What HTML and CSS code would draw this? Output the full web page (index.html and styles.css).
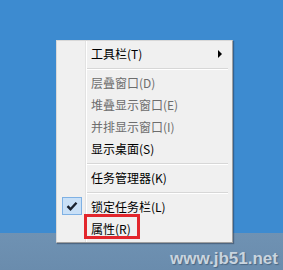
FILE: index.html
```html
<!DOCTYPE html>
<html lang="zh-CN">
<head>
<meta charset="utf-8">
<link rel="stylesheet" href="styles.css">
</head>
<body>
<div class="screen">
  <div class="desktop"></div>
  <div class="taskbar">
    <span class="watermark">www.jb51.net</span>
  </div>
  <div class="menu">
    <div class="gutter-line"></div>
    <div class="item">
      <span class="label">工具栏(T)</span>
      <span class="arrow"></span>
    </div>
    <div class="sep"></div>
    <div class="item disabled"><span class="label">层叠窗口(D)</span></div>
    <div class="item disabled"><span class="label">堆叠显示窗口(E)</span></div>
    <div class="item disabled"><span class="label">并排显示窗口(I)</span></div>
    <div class="item"><span class="label">显示桌面(S)</span></div>
    <div class="sep"></div>
    <div class="item"><span class="label">任务管理器(K)</span></div>
    <div class="sep"></div>
    <div class="item">
      <span class="check">
        <svg width="12" height="10" viewBox="0 0 12 10"><path d="M1.5 5.2 L4.5 8.2 L10.5 1.8" fill="none" stroke="#1a2230" stroke-width="2.4"/></svg>
      </span>
      <span class="label">锁定任务栏(L)</span>
    </div>
    <div class="item highlight"><span class="label">属性(R)</span></div>
  </div>
</div>
</body>
</html>
```
FILE: styles.css
```css
html, body {
  margin: 0;
  padding: 0;
}
body {
  width: 283px;
  height: 270px;
  overflow: hidden;
  font-family: "Noto Sans CJK SC", "Noto Sans", sans-serif;
  font-size: 12px;
}
.screen {
  position: relative;
  width: 283px;
  height: 270px;
  display: flex;
  flex-direction: column;
}
.desktop {
  height: 233px;
  background: #3d8bd0;
}
.taskbar {
  flex: 1;
  background: linear-gradient(#6f92b3, #6a8cad);
  display: flex;
  justify-content: flex-end;
  align-items: flex-end;
  padding: 0 5px 1px 0;
}
.watermark {
  font-family: "Liberation Sans", Arial, sans-serif;
  font-weight: bold;
  font-size: 17px;
  color: #c9d4de;
  text-shadow: 1px 1px 1px #4a6784;
  line-height: 20px;
}
.menu {
  position: absolute;
  left: 56px;
  top: 40px;
  width: 175px;
  padding: 2px 0;
  background: #f0f0f0;
  border: 1px solid #a0a0a0;
  border-top-color: #d8d8d8;
  border-left-color: #d8d8d8;
  box-shadow: 1px 1px 1px rgba(40, 50, 70, 0.45);
}
.gutter-line {
  position: absolute;
  left: 28px;
  top: 0;
  bottom: 0;
  width: 1px;
  background: #e2e2e2;
  border-right: 1px solid #ffffff;
}
.item {
  position: relative;
  height: 22px;
  display: flex;
  align-items: center;
  padding-left: 34px;
  color: #000;
}
.label {
  line-height: 22px;
}
.disabled {
  color: #6d6d6d;
}
.arrow {
  position: absolute;
  left: 161px;
  top: 7px;
  width: 0;
  height: 0;
  border-top: 4px solid transparent;
  border-bottom: 4px solid transparent;
  border-left: 4px solid #000;
}
.sep {
  height: 7px;
  display: flex;
  align-items: center;
  margin-left: 30px;
  margin-right: 4px;
}
.sep::before {
  content: "";
  display: block;
  width: 100%;
  height: 1px;
  background: #d7d7d7;
  border-bottom: 1px solid #ffffff;
}
.check {
  position: absolute;
  left: 5px;
  top: 1px;
  width: 18px;
  height: 16px;
  background: #c9e0f7;
  border: 1px solid #7fb1e4;
  display: flex;
  align-items: center;
  justify-content: center;
}
.highlight::after {
  content: "";
  position: absolute;
  left: 27px;
  top: -4px;
  width: 50px;
  height: 19px;
  border: 3px solid #e2262c;
}
```
